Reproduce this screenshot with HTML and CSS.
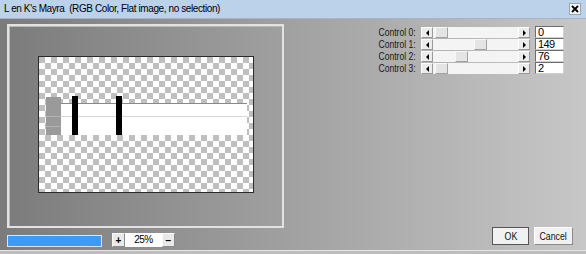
FILE: index.html
```html
<!DOCTYPE html>
<html lang="en">
<head>
    <meta charset="UTF-8">
    <title>L en K's Mayra</title>
    <link rel="stylesheet" href="styles.css">
</head>
<body>
    <div class="dialog">
        <div class="titlebar">
            <span class="title">L en K's Mayra&nbsp; (RGB Color, Flat image, no selection)</span>
            <span class="close">
                <svg width="8" height="8" viewBox="0 0 8 8"><path d="M1 1L7 7M7 1L1 7" stroke="#000" stroke-width="1.8"/></svg>
            </span>
        </div>

        <div class="content">
            <div class="left">
                <div class="preview">
                    <svg class="picture" width="216" height="137" viewBox="0 0 216 137">
                        <defs>
                            <pattern id="chk" width="12" height="12" patternUnits="userSpaceOnUse" x="1" y="1">
                                <rect width="12" height="12" fill="#fff"/>
                                <rect width="6" height="6" fill="#bfbfbf"/>
                                <rect x="6" y="6" width="6" height="6" fill="#bfbfbf"/>
                            </pattern>
                        </defs>
                        <rect x="1" y="1" width="214" height="135" fill="url(#chk)"/>
                        <rect x="8" y="47" width="201" height="32" fill="#fff"/>
                        <rect x="23" y="47" width="186" height="1" fill="#8a8a8a"/>
                        <rect x="23" y="60" width="186" height="1" fill="#d6d6d6"/>
                        <rect x="8" y="41" width="15" height="38" fill="#9a9a9a"/>
                        <rect x="8" y="60" width="15" height="1" fill="#b4b4b4"/>
                        <rect x="8" y="70" width="15" height="1" fill="#b4b4b4"/>
                        <rect x="34" y="40" width="6" height="39" fill="#000"/>
                        <rect x="78" y="40" width="6" height="39" fill="#000"/>
                        <rect x="0.5" y="0.5" width="215" height="136" fill="none" stroke="#2a2a2a"/>
                    </svg>
                </div>
                <div class="bottom-row">
                    <div class="progress"></div>
                    <div class="zoom">
                        <span class="zoom-btn">+</span>
                        <span class="zoom-val">25%</span>
                        <span class="zoom-btn">&minus;</span>
                    </div>
                </div>
            </div>

            <div class="right">
                <div class="controls">
                    <div class="control-row">
                        <label class="control-label">Control 0:</label>
                        <div class="scrollbar">
                            <span class="arrow arrow-left"></span>
                            <span class="track"><span class="thumb" style="margin-left: 2px"></span></span>
                            <span class="arrow arrow-right"></span>
                        </div>
                        <span class="value">0</span>
                    </div>
                    <div class="control-row">
                        <label class="control-label">Control 1:</label>
                        <div class="scrollbar">
                            <span class="arrow arrow-left"></span>
                            <span class="track"><span class="thumb" style="margin-left: 41px"></span></span>
                            <span class="arrow arrow-right"></span>
                        </div>
                        <span class="value">149</span>
                    </div>
                    <div class="control-row">
                        <label class="control-label">Control 2:</label>
                        <div class="scrollbar">
                            <span class="arrow arrow-left"></span>
                            <span class="track"><span class="thumb" style="margin-left: 22px"></span></span>
                            <span class="arrow arrow-right"></span>
                        </div>
                        <span class="value">76</span>
                    </div>
                    <div class="control-row">
                        <label class="control-label">Control 3:</label>
                        <div class="scrollbar">
                            <span class="arrow arrow-left"></span>
                            <span class="track"><span class="thumb" style="margin-left: 2px"></span></span>
                            <span class="arrow arrow-right"></span>
                        </div>
                        <span class="value">2</span>
                    </div>
                </div>

                <div class="buttons">
                    <button class="btn btn-default"><span class="btn-text">OK</span></button>
                    <button class="btn"><span class="btn-text">Cancel</span></button>
                </div>
            </div>
        </div>
        <div class="frame-bottom"></div>
    </div>
</body>
</html>
```

FILE: styles.css
```css
* {
    margin: 0;
    padding: 0;
    box-sizing: border-box;
}

body {
    width: 586px;
    height: 254px;
    overflow: hidden;
    font-family: 'Liberation Sans', Arial, sans-serif;
    color: #000;
}

.dialog {
    width: 586px;
    height: 254px;
    display: flex;
    flex-direction: column;
}

/* title bar */
.titlebar {
    height: 19px;
    flex: none;
    display: flex;
    align-items: center;
    justify-content: space-between;
    padding: 0 5px 0 4px;
    background: #bcd2ea;
    border-bottom: 1px solid #a9b4c0;
}

.title {
    font-size: 10px;
    letter-spacing: -0.4px;
    line-height: 18px;
}

.close {
    width: 12px;
    height: 12px;
    display: flex;
    align-items: center;
    justify-content: center;
    background: #f2f5f8;
    border: 1px solid #9aa6b2;
}

/* main area */
.content {
    flex: 1;
    display: flex;
    background: linear-gradient(to right, #7b7b7b, #c7c7c7);
}

.left {
    width: 284px;
    flex: none;
    padding: 5px 0 0 7px;
    display: flex;
    flex-direction: column;
}

.preview {
    height: 204px;
    border: 2px solid #e2e2e2;
    box-shadow: inset 1px 1px 0 #b9b9b9;
    display: flex;
    align-items: center;
    justify-content: center;
}

.picture {
    display: block;
    margin-top: -3px;
}

.bottom-row {
    margin-top: 5px;
    display: flex;
    align-items: center;
    gap: 10px;
}

.progress {
    width: 95px;
    height: 12px;
    background: #3a9cf6;
    border: 1px solid #d8e4f0;
    margin-top: 2px;
}

.zoom {
    display: flex;
    height: 14px;
}

.zoom-btn {
    width: 13px;
    height: 14px;
    display: flex;
    align-items: center;
    justify-content: center;
    font-size: 10px;
    font-weight: bold;
    background: #e9e9e9;
    border: 1px solid;
    border-color: #fafafa #8c8c8c #8c8c8c #fafafa;
}

.zoom-val {
    width: 37px;
    height: 14px;
    background: #fff;
    font-size: 10px;
    line-height: 14px;
    text-align: center;
    letter-spacing: -0.5px;
}

/* right side */
.right {
    flex: 1;
    display: flex;
    flex-direction: column;
    justify-content: space-between;
    padding: 7px 13px 5px 0;
}

.controls {
    display: flex;
    flex-direction: column;
    align-items: flex-end;
    padding-right: 9px;
}

.control-row {
    height: 12px;
    display: flex;
    align-items: center;
}

/* the dialog font is a narrow one, squeeze Liberation Sans to match */
.control-label {
    font-size: 11px;
    color: #1a1a1a;
    margin-right: 5px;
    transform: scaleX(0.78);
    transform-origin: right center;
}

.scrollbar {
    width: 109px;
    height: 11px;
    display: flex;
    background: #f4f4f4;
}

.arrow {
    width: 12px;
    height: 11px;
    flex: none;
    position: relative;
    background: #ececec;
    border: 1px solid;
    border-color: #fff #9a9a9a #9a9a9a #fff;
}

.arrow::before {
    content: '';
    position: absolute;
    top: 2px;
    left: 4px;
    border-top: 3px solid transparent;
    border-bottom: 3px solid transparent;
}

.arrow-left::before {
    border-right: 3px solid #000;
}

.arrow-right::before {
    border-left: 3px solid #000;
}

.track {
    flex: 1;
    display: flex;
}

.thumb {
    width: 13px;
    height: 11px;
    background: #e4e4e4;
    border: 1px solid;
    border-color: #f8f8f8 #a2a2a2 #a2a2a2 #f8f8f8;
}

.value {
    width: 29px;
    height: 12px;
    margin-left: 5px;
    padding-left: 2px;
    background: #fff;
    border: 1px solid;
    border-color: #6e6e6e #d0d0d0 #d0d0d0 #6e6e6e;
    font-size: 11px;
    letter-spacing: -0.6px;
    line-height: 10px;
}

.buttons {
    display: flex;
    justify-content: flex-end;
    gap: 5px;
}

.btn {
    height: 18px;
    width: 39px;
    display: flex;
    align-items: center;
    justify-content: center;
    font-family: 'Liberation Sans', sans-serif;
    font-size: 11px;
    background: #f1f1f1;
    border: 1px solid;
    border-color: #fff #8a8a8a #8a8a8a #fff;
    color: #111;
}

.btn-text {
    display: inline-block;
    transform: scaleX(0.8);
}

.btn-default {
    width: 37px;
    outline: 1px solid #555;
    outline-offset: -1px;
}

.frame-bottom {
    height: 4px;
    flex: none;
    background: #bdbdbd;
    border-top: 1px solid #e6e6e6;
}
```
